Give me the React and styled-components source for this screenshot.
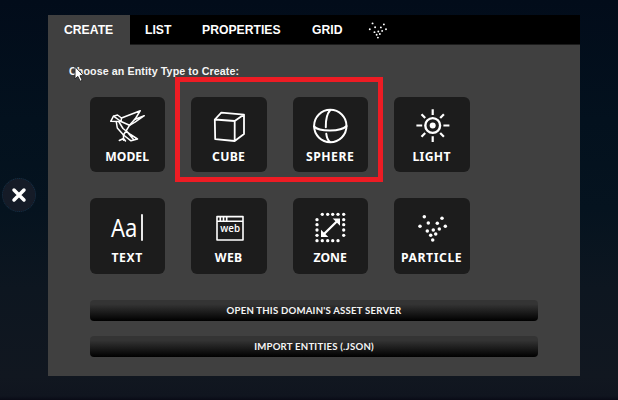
import React from 'react';
import styled, { createGlobalStyle } from 'styled-components';

const GlobalStyle = createGlobalStyle`
  * { box-sizing: border-box; }
  body { margin: 0; background: #06121f; }
`;

const Screen = styled.main`
  position: relative;
  display: flex;
  align-items: flex-start;
  width: 618px;
  height: 400px;
  padding-top: 15px;
  overflow: hidden;
  background: linear-gradient(180deg, #020c1a 0%, #03111e 30%, #05131f 52%, #0d1620 72%, #111720 94%, #10151f 99%, #090b16 100%);
`;

const Side = styled.aside`
  display: flex;
  align-items: center;
  width: 48px;
  height: 360px;
  padding-left: 2px;
`;

const CloseButton = styled.button`
  display: flex;
  align-items: center;
  justify-content: center;
  width: 34px;
  height: 34px;
  padding: 0;
  border: 1px dotted #123047;
  border-radius: 50%;
  background: #151b27;
`;

const Panel = styled.section`
  width: 532px;
  height: 361px;
  background: #404040;
`;

const TabBar = styled.nav`
  display: flex;
  height: 30px;
  background: #000;
  border-bottom: 1px solid #1c1c1c;
`;

const Tab = styled.button`
  height: 30px;
  width: ${(p) => p.$width}px;
  padding: 0 0 1px ${(p) => p.$inset || 0}px;
  border: 0;
  text-align: left;
  color: #fff;
  background: ${(p) => (p.$active ? '#404040' : 'transparent')};
  font: bold 12.2px/28px 'Liberation Sans', Arial, sans-serif;
  white-space: nowrap;
`;

const TabIcon = styled.svg`
  display: block;
  width: 47px;
  height: 30px;
`;

const Body = styled.div`
  display: flex;
  flex-direction: column;
  padding: 20px 42px 0;
`;

const Heading = styled.h1`
  height: 32px;
  margin: 0 0 0 -21px;
  color: #f5f5f5;
  font: bold 10.7px/13px 'Liberation Sans', Arial, sans-serif;
  letter-spacing: 0.09px;
`;

const TileGrid = styled.div`
  display: grid;
  grid-template-columns: repeat(4, 75.3px);
  column-gap: 26.2px;
  row-gap: 26px;
`;

const Tile = styled.button`
  display: flex;
  flex-direction: column;
  align-items: center;
  width: 75.3px;
  height: 75.3px;
  padding: 0;
  border: 0;
  border-radius: 6px;
  color: #fff;
  background: #1c1c1c;
`;

const TileIcon = styled.svg`
  display: block;
  flex: none;
  width: 75px;
  height: 50px;
  fill: none;
  stroke: #fff;
  stroke-width: 2;
  stroke-linecap: round;
  stroke-linejoin: round;
`;

const TileLabel = styled.span`
  margin-right: 1px;
  font: bold 12.2px/19px 'Noto Sans', sans-serif;
  letter-spacing: ${(p) => p.$spacing}px;
  white-space: nowrap;
`;

const GlyphText = styled.text`
  fill: #fff;
  stroke: none;
  font: ${(p) => p.$font};
`;

const Actions = styled.div`
  display: grid;
  gap: 15px;
  margin-top: 26.4px;
`;

const Action = styled.button`
  height: 21px;
  padding: 0;
  border: 0;
  border-radius: 4px;
  color: #f4f4f4;
  background: linear-gradient(#343434 20%, #000 100%);
  font: bold 9.6px/21px Lato, sans-serif;
  letter-spacing: 0.22px;
`;

const Highlight = styled.div`
  position: absolute;
  left: 175px;
  top: 77px;
  width: 208px;
  height: 105px;
  border: 5px solid #ed1c24;
  pointer-events: none;
`;

const Pointer = styled.svg`
  position: absolute;
  left: 73px;
  top: 65px;
  width: 12px;
  height: 18px;
`;

const particles = [
  [29.3, 18.7], [47, 20.3], [33.3, 25], [42.3, 25.3], [25, 28.3], [50.3, 28.3],
  [44.3, 31], [38.3, 32], [32.3, 33], [40.7, 36], [35.7, 37.3], [37.7, 42],
];

const zoneDots = [
  [29.3, 16.3], [34.7, 16.3], [39.7, 16.3], [45, 16.3], [50.7, 16.3],
  [50.7, 21.7], [50.7, 26.7], [50.7, 32], [50.7, 37.3],
  [24, 21.7], [24, 26.7], [24, 32], [24, 37.3],
  [24, 42.7], [29.3, 42.7], [34.7, 42.7], [39.7, 42.7], [45, 42.7],
];

const Dots = ({ points, r }) => (
  <g fill="#fff" stroke="none">
    {points.map(([x, y]) => <circle key={`${x}-${y}`} cx={x} cy={y} r={r} />)}
  </g>
);

const icons = {
  model: (
    <g strokeWidth="1.5">
      <path d="M20.7 24.3 23.5 19.2 27.5 18 31.5 21 50.3 13.7 45.5 21.5 39.5 28.3 31 24.5 20.7 24.3" />
      <path d="M23.5 19.2 31 24.5 31.5 21" />
      <path d="M44.5 22.5 54.3 18.7 45 25.2 39.5 28.3" />
      <path d="M26.3 25 27.3 31 33.5 38 39.5 28.3M29 25 33 31.5 40.5 37.5 47.5 42 41 43.8 33.5 38M36.5 34 43.5 42.5" />
      <path d="M33.5 37.5V43.3M29.3 43.5 33.5 41.5 35.5 44" />
    </g>
  ),
  cube: (
    <path d="M22.8 22.5 42.7 24V44L23.2 42.2ZM22.8 22.5 29.3 15.6 52 17.6 42.7 24M52 17.6V37L42.7 44" strokeWidth="1.8" />
  ),
  sphere: (
    <>
      <circle cx="37.3" cy="29" r="16.2" />
      <path d="M21 29.5C26 34.8 48 35 53.5 29M37.3 13C33.5 17 32.7 24 32.8 30.2M33.3 36.8C33.8 41 35 43.5 37 45" />
    </>
  ),
  light: (
    <g strokeWidth="2.2" strokeLinecap="butt">
      <circle cx="37.7" cy="28.5" r="7.4" strokeWidth="2.4" />
      <circle cx="37.7" cy="28.5" r="3" fill="#fff" stroke="none" />
      <path d="M21.4 28.5H27.2M48.4 28.5H54.4M37.7 12.3V18M37.7 39.3V45M26.5 17.2 30.2 21M48.9 17.2 45.2 21M26.5 39.7 30.2 36M48.9 39.7 45.2 36" />
    </g>
  ),
  text: (
    <>
      <GlyphText x="21" y="38.7" textLength="26.3" lengthAdjust="spacingAndGlyphs" $font="400 24.5px 'Noto Sans', sans-serif">Aa</GlyphText>
      <path d="M52 17V42" strokeWidth="1.8" />
    </>
  ),
  web: (
    <>
      <path d="M25 18.6H51V42H25ZM25 23.3H51M28.3 19V22.5M31.5 19V22.5M34.7 19V22.5" strokeWidth="1.6" />
      <GlyphText x="28.2" y="34.4" textLength="19.8" $font="600 9.8px 'Open Sans', sans-serif">web</GlyphText>
    </>
  ),
  zone: (
    <>
      <Dots points={zoneDots} r={1.65} />
      <path d="M31 36 44 23.2" strokeWidth="2.3" />
      <path d="M39.7 20.4H47V27.7ZM28 31.7V39H35.3Z" fill="#fff" stroke="none" />
    </>
  ),
  particle: <Dots points={particles} r={1.75} />,
};

const entities = [
  { icon: 'model', label: 'MODEL', spacing: 0 },
  { icon: 'cube', label: 'CUBE', spacing: 0.3 },
  { icon: 'sphere', label: 'SPHERE', spacing: 0.5 },
  { icon: 'light', label: 'LIGHT', spacing: 0.3 },
  { icon: 'text', label: 'TEXT', spacing: 0.6 },
  { icon: 'web', label: 'WEB', spacing: 0.3 },
  { icon: 'zone', label: 'ZONE', spacing: 0 },
  { icon: 'particle', label: 'PARTICLE', spacing: 0.6 },
];

export default function App() {
  return (
    <Screen>
      <GlobalStyle />
      <Side>
        <CloseButton aria-label="Close">
          <svg width="16" height="16" viewBox="0 0 16 16">
            <path d="M3 3 13 13M13 3 3 13" stroke="#fff" strokeWidth="3.5" strokeLinecap="round" />
          </svg>
        </CloseButton>
      </Side>
      <Panel>
        <TabBar>
          <Tab $active $width={81.5} $inset={16}>CREATE</Tab>
          <Tab $width={58} $inset={15.5}>LIST</Tab>
          <Tab $width={110} $inset={14.5}>PROPERTIES</Tab>
          <Tab $width={61} $inset={14.5}>GRID</Tab>
          <TabIcon viewBox="0 0 47 30">
            <g transform="translate(-5.2 -3) scale(.64 .61)">
              <Dots points={particles} r={1.5} />
            </g>
          </TabIcon>
        </TabBar>
        <Body>
          <Heading>Choose an Entity Type to Create:</Heading>
          <TileGrid>
            {entities.map(({ icon, label, spacing }) => (
              <Tile key={icon}>
                <TileIcon viewBox="0 0 75 50">{icons[icon]}</TileIcon>
                <TileLabel $spacing={spacing}>{label}</TileLabel>
              </Tile>
            ))}
          </TileGrid>
          <Actions>
            <Action>OPEN THIS DOMAIN'S ASSET SERVER</Action>
            <Action>IMPORT ENTITIES (.JSON)</Action>
          </Actions>
        </Body>
      </Panel>
      <Highlight />
      <Pointer viewBox="0 0 12 18">
        <path d="M2 1.5V14L4.8 11.4 7.2 16.3 9.2 15.3 7 10.7H10.5Z" fill="#fff" stroke="#292929" strokeWidth="1" />
      </Pointer>
    </Screen>
  );
}
